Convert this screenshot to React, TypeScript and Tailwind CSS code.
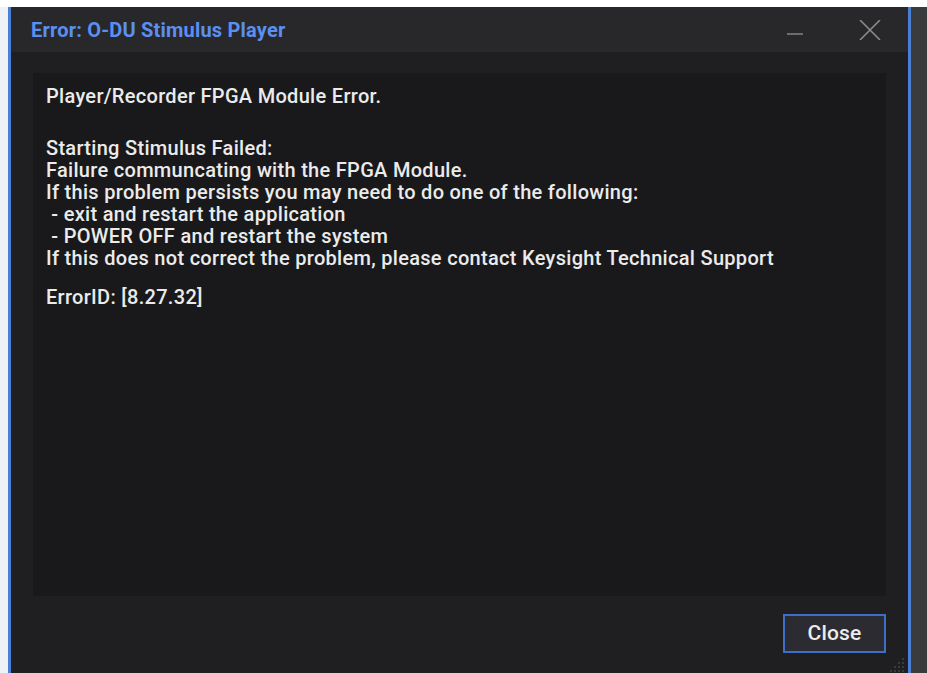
import React from 'react';

const lines = [
  'Failure communcating with the FPGA Module.',
  'If this problem persists you may need to do one of the following:',
  ' - exit and restart the application',
  ' - POWER OFF and restart the system',
  'If this does not correct the problem, please contact Keysight Technical Support',
];

function ResizeGrip() {
  const dots: [number, number][] = [
    [12, 0],
    [8, 4], [12, 4],
    [4, 8], [8, 8], [12, 8],
    [0, 12], [4, 12], [8, 12], [12, 12],
  ];
  return (
    <svg width="16" height="16" viewBox="0 0 16 16" className="absolute right-[3px] bottom-0">
      {dots.map(([x, y]) => (
        <rect key={`${x}-${y}`} x={x + 1} y={y + 1} width="2" height="2" fill="#3a3a40" />
      ))}
    </svg>
  );
}

export default function App() {
  return (
    <div
      className="w-[927px] h-[673px] overflow-hidden bg-white flex pt-[7px]"
      style={{ fontFamily: 'Roboto, "Liberation Sans", sans-serif' }}
    >
      <div className="w-[8px] shrink-0 bg-[#eef1f5]" />

      {/* dialog window */}
      <div className="w-[903px] shrink-0 flex flex-col border-x-[3px] border-[#4a7fd6] bg-[#1f1f22] relative">
        <div className="h-[45px] flex items-center justify-between bg-[#28282b] pl-[20px] pr-[27px]">
          <span className="text-[20px] font-bold text-[#5b8ff0] tracking-[0.2px]">Error: O-DU Stimulus Player</span>
          <div className="flex items-center gap-[56px]">
            <svg width="16" height="20" viewBox="0 0 16 20">
              <line x1="0" y1="14" x2="16" y2="14" stroke="#6b6b70" strokeWidth="2" />
            </svg>
            <svg width="22" height="20" viewBox="0 0 22 20">
              <path d="M1 0 L21 20 M21 0 L1 20" stroke="#8a8a8e" strokeWidth="1.6" />
            </svg>
          </div>
        </div>

        <div className="flex-1 flex flex-col px-[22px] pt-[21px]">
          <div className="h-[523px] bg-[#19191c] pl-[13px] pt-[12px] text-[20px] leading-[22px] font-medium text-[#ebebeb] tracking-[0.3px]">
            <p>Player/Recorder FPGA Module Error.</p>
            <p className="mt-[30px]">Starting Stimulus Failed:</p>
            {lines.map((l) => (
              <p key={l} className="whitespace-pre">{l}</p>
            ))}
            <p className="mt-[17px]">ErrorID: [8.27.32]</p>
          </div>

          <div className="flex justify-end mt-[18px]">
            <button className="w-[103px] h-[39px] border-2 border-[#3e6fc8] bg-[#2b2b31] text-[21px] font-medium text-[#ececec] tracking-[0.2px]">
              Close
            </button>
          </div>
        </div>
        <ResizeGrip />
      </div>

      <div className="flex-1 bg-[#3a3b3c]" />
    </div>
  );
}
